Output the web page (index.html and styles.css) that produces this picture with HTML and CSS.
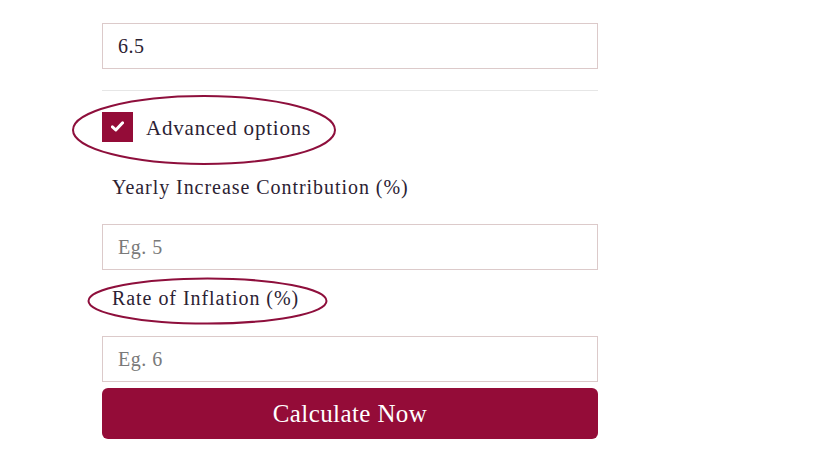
FILE: index.html
```html
<!DOCTYPE html>
<html lang="en">

<head>
    <meta charset="UTF-8">
    <meta name="viewport" content="width=device-width, initial-scale=1.0">
    <title>Calculator</title>

    <link rel="stylesheet" href="styles.css">
</head>

<body>
    <div class="calc-form">
        <input type="text" class="field" value="6.5">

        <hr class="divider">

        <label class="advanced">
            <span class="check-box">
                <svg width="13" height="11" viewBox="0 0 13 11">
                    <path d="M1.4 5.8 L4.8 9 L11.6 1.8" fill="none" stroke="#fff" stroke-width="3" stroke-linecap="round" stroke-linejoin="round" />
                </svg>
            </span>
            <span class="advanced-text">Advanced options</span>
            <!-- hand drawn circle around the option -->
            <svg class="mark mark-advanced" width="266" height="72" viewBox="0 0 266 72">
                <ellipse cx="133" cy="36" rx="131" ry="34" fill="none" stroke="#8e0f3c" stroke-width="2" />
            </svg>
        </label>

        <div class="field-label first">Yearly Increase Contribution (%)</div>
        <input type="text" class="field" placeholder="Eg. 5">

        <div class="field-label">
            <span class="label-wrap">Rate of Inflation (%)
                <svg class="mark mark-rate" width="241" height="48" viewBox="0 0 241 48">
                    <ellipse cx="120.5" cy="24" rx="119" ry="22.5" fill="none" stroke="#8e0f3c" stroke-width="2" />
                </svg>
            </span>
        </div>
        <input type="text" class="field" placeholder="Eg. 6">

        <button type="button" class="calc-button">Calculate Now</button>
    </div>
</body>

</html>
```

FILE: styles.css
```css
body {
    background-color: white;
    font-family: "Liberation Serif", "DejaVu Serif", serif;
    margin: 0;
    padding: 0;
}

.calc-form {
    width: 496px;
    margin-left: 102px;
    padding-top: 23px;
    display: flex;
    flex-direction: column;
}

.field {
    box-sizing: border-box;
    width: 100%;
    height: 46px;
    border: 1px solid #dccaca;
    padding: 0 15px;
    font-family: inherit;
    font-size: 20px;
    letter-spacing: 0.5px;
    color: #2c2233;
    background-color: white;
    outline: none;
}

.field::placeholder {
    color: #7a7a7a;
}

.divider {
    width: 100%;
    border: none;
    border-top: 1px solid #e6e6e6;
    margin: 21px 0 21px 0;
}

.advanced {
    position: relative;
    display: flex;
    align-items: center;
    height: 30px;
}

.check-box {
    width: 31px;
    height: 30px;
    background-color: #940c38;
    display: flex;
    justify-content: center;
    align-items: center;
}

.check-box svg {
    margin-top: -2px;
}

.advanced-text {
    margin-left: 13px;
    padding-top: 3px;
    font-size: 21px;
    letter-spacing: 0.8px;
    color: #2c2233;
}

.field-label {
    padding: 14px 0 0 10px;
    margin-bottom: 24px;
    font-size: 20px;
    line-height: 28px;
    letter-spacing: 0.95px;
    color: #2c2233;
}

.field-label.first {
    padding-top: 31px;
    margin-bottom: 23px;
}

.label-wrap {
    position: relative;
}

/* annotation ellipses drawn over the form */
.mark {
    position: absolute;
    pointer-events: none;
}

.mark-advanced {
    left: -31px;
    top: -18px;
}

.mark-rate {
    left: -25px;
    top: -10px;
}

.calc-button {
    margin-top: 6px;
    height: 51px;
    width: 100%;
    background-color: #940c38;
    color: white;
    border: none;
    border-radius: 6px;
    font-family: inherit;
    font-size: 25px;
    letter-spacing: 0.4px;
    cursor: pointer;
}
```
